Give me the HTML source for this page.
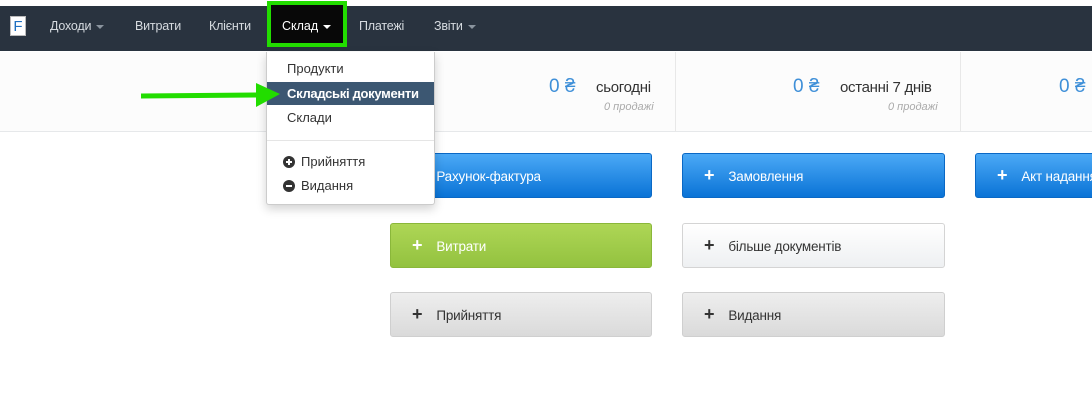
<!DOCTYPE html>
<html><head><meta charset="utf-8"><style>
*{box-sizing:border-box;margin:0;padding:0}
body{width:1092px;height:408px;overflow:hidden;background:#fff;font-family:"Liberation Sans",sans-serif;font-size:13px;position:relative}
.nav{position:absolute;left:0;top:6px;width:1092px;height:45px;background:#29333f}
.nav span{position:absolute;top:13px;color:#d6dbe0;font-size:12.5px;letter-spacing:-0.2px}
.caret{display:inline-block;width:0;height:0;border-left:4px solid transparent;border-right:4px solid transparent;border-top:4px solid #8a949e;vertical-align:middle;margin-left:5px}
.logo{position:absolute;left:10px;top:10px;width:16px;height:20px;background:#fff;border:1px solid #bbb;color:#1e6fc0;font-size:15px;text-align:center;line-height:19px}
.act{position:absolute;left:267px;top:1px;width:80px;height:46px;border:4px solid #22dd00;background:#080808}
.stats{position:absolute;left:0;top:52px;width:1092px;height:80px;background:#fcfcfc;border-bottom:1px solid #e6e8ea}
.div{position:absolute;top:52px;width:1px;height:80px;background:#e8e8e8}
.num{position:absolute;top:76px;color:#3e8fd8;font-size:19px}
.lab{position:absolute;top:79px;color:#333;font-size:15px;letter-spacing:-0.3px}
.sub{position:absolute;top:101px;color:#aaa;font-size:11px;font-style:italic}
.btn{position:absolute;height:45px;border-radius:3px;font-size:13.5px;line-height:43px;padding-left:21px;letter-spacing:-0.2px}
.blue{background:linear-gradient(#4ba9f6,#0a73d6);border:1px solid #0a68c5;color:#fff}
.green{background:linear-gradient(#aed656,#93c23f);border:1px solid #8ab73a;color:#fff}
.white{background:linear-gradient(#fff,#eef0f2);border:1px solid #d4d4d4;color:#333}
.grey{background:linear-gradient(#eee,#dadada);border:1px solid #cfcfcf;color:#333}
.btn b{font-size:18px;margin-right:14px;font-weight:bold}
.dd{position:absolute;left:266px;top:52px;width:169px;height:153px;background:#fff;border:1px solid #ccc;border-top:none;border-radius:0 0 3px 3px;box-shadow:0 4px 10px rgba(0,0,0,.18)}
.dd div{position:absolute;left:20px;color:#333;font-size:13px}
.ic{display:inline-block;vertical-align:-2px;margin-right:6px}
</style></head><body>
<div class="nav">
<div class="logo">F</div>
<span style="left:50px">Доходи<i class="caret"></i></span>
<span style="left:135px">Витрати</span>
<span style="left:209px">Клієнти</span>
<span style="left:359px">Платежі</span>
<span style="left:434px">Звіти<i class="caret"></i></span>
</div>
<div class="act"></div>
<span style="position:absolute;left:282px;top:19px;color:#fff;font-size:12.5px">Склад<i class="caret" style="border-top-color:#fff"></i></span>
<div class="stats"></div>
<div class="div" style="left:675px"></div><div class="div" style="left:960px"></div>
<div class="num" style="left:549px">0 ₴</div><div class="lab" style="left:596px">сьогодні</div><div class="sub" style="left:604px">0 продажі</div>
<div class="num" style="left:793px">0 ₴</div><div class="lab" style="left:840px">останні 7 днів</div><div class="sub" style="left:888px">0 продажі</div>
<div class="num" style="left:1059px">0 ₴</div>
<div class="btn blue" style="left:390px;top:153px;width:262px"><b>+</b>Рахунок-фактура</div>
<div class="btn blue" style="left:682px;top:153px;width:263px"><b>+</b>Замовлення</div>
<div class="btn blue" style="left:975px;top:153px;width:140px"><b>+</b>Акт надання</div>
<div class="btn green" style="left:390px;top:223px;width:262px"><b>+</b>Витрати</div>
<div class="btn white" style="left:682px;top:223px;width:263px"><b>+</b>більше документів</div>
<div class="btn grey" style="left:390px;top:292px;width:262px"><b>+</b>Прийняття</div>
<div class="btn grey" style="left:682px;top:292px;width:263px"><b>+</b>Видання</div>
<div class="dd">
<div style="top:9px">Продукти</div>
<div style="left:0;top:30px;width:167px;height:23px;background:#3c5772;color:#fff;font-weight:bold;padding-left:20px;line-height:23px;letter-spacing:-0.3px">Складські документи</div>
<div style="top:58px">Склади</div>
<div style="left:0;top:88px;width:167px;height:1px;background:#e5e5e5"></div>
<div style="top:102px;left:16px"><svg class="ic" width="12" height="12"><circle cx="6" cy="6" r="6" fill="#333"/><path d="M6 3V9M3 6H9" stroke="#fff" stroke-width="2"/></svg>Прийняття</div>
<div style="top:126px;left:16px"><svg class="ic" width="12" height="12"><circle cx="6" cy="6" r="6" fill="#333"/><path d="M3 6H9" stroke="#fff" stroke-width="2"/></svg>Видання</div>
</div>
<svg style="position:absolute;left:0;top:0" width="300" height="120"><path d="M141 96 L258 95" stroke="#22dd00" stroke-width="5"/><path d="M256 83 L280 94 L256 107Z" fill="#22dd00"/></svg>
</body></html>
